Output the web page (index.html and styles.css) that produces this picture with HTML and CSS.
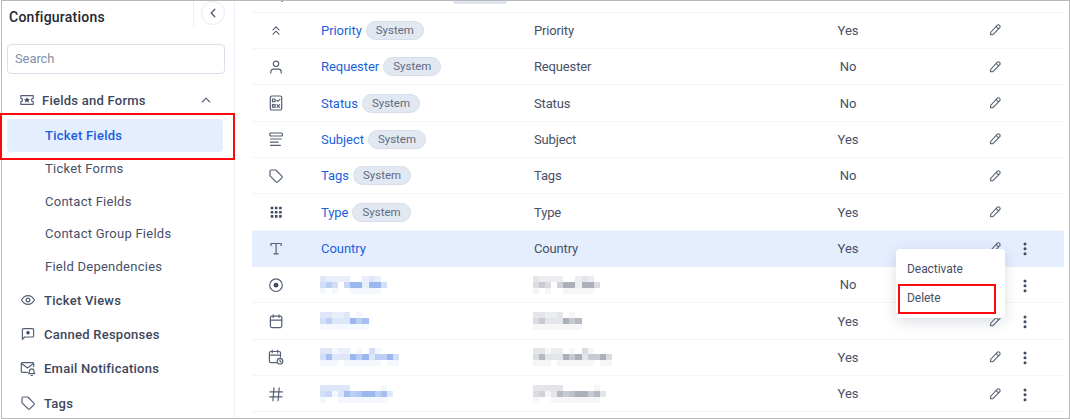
FILE: index.html
```html
<!DOCTYPE html>
<html lang="en">
<head>
    <meta charset="UTF-8">
    <meta name="viewport" content="width=device-width, initial-scale=1.0">
    <title>Ticket Fields</title>
    <link rel="stylesheet" href="styles.css">
</head>
<body>
    <svg class="sprite">
        <symbol id="i-priority" viewBox="0 0 16 16"><path d="M5 7.9l3-3 3 3M5 12.2l3-3 3 3"/></symbol>
        <symbol id="i-requester" viewBox="0 0 16 16"><circle cx="8" cy="4.8" r="2.7"/><path d="M2.8 14v-1.2a2.6 2.6 0 0 1 2.6-2.6h5.2a2.6 2.6 0 0 1 2.6 2.6V14"/></symbol>
        <symbol id="i-status" viewBox="0 0 16 16"><rect x="2.3" y="1" width="11.4" height="14" rx="1.6"/><path d="M4.5 4h2.6v2.6H4.5zM4.5 9.6h2.6v2.6H4.5zM8.8 5.4l1 1L12 4.2M9 9.7l2.6 2.6M11.6 9.7L9 12.3"/></symbol>
        <symbol id="i-subject" viewBox="0 0 16 16"><rect x="1.8" y="2" width="12.6" height="3" rx="1"/><path d="M2.5 8h10.7M2.5 11.2h7.6M2.5 14.4h9.8"/></symbol>
        <symbol id="i-tag" viewBox="0 0 16 16"><path d="M2 3.2A1.2 1.2 0 0 1 3.2 2h4.6l6.1 6.1a1.2 1.2 0 0 1 0 1.7l-4.1 4.1a1.2 1.2 0 0 1-1.7 0L2 7.8z"/></symbol>
        <symbol id="i-type" viewBox="0 0 16 16"><path class="solid" d="M2.7 2.7h2.6v2.6H2.7zM6.9 2.7h2.6v2.6H6.9zM11.1 2.7h2.6v2.6h-2.6zM2.7 6.9h2.6v2.6H2.7zM6.9 6.9h2.6v2.6H6.9zM11.1 6.9h2.6v2.6h-2.6zM2.7 11.1h2.6v2.6H2.7zM6.9 11.1h2.6v2.6H6.9zM11.1 11.1h2.6v2.6h-2.6z"/></symbol>
        <symbol id="i-text" viewBox="0 0 16 16"><path d="M3 5.6V3.5h10.2v2.1M8.1 3.5v10.3M6 13.8h4.2"/></symbol>
        <symbol id="i-radio" viewBox="0 0 16 16"><circle cx="8" cy="8.2" r="6.3"/><circle class="solid" cx="8" cy="8.2" r="2.4"/></symbol>
        <symbol id="i-date" viewBox="0 0 16 16"><rect x="2.4" y="3.2" width="11.4" height="11.4" rx="1.5"/><path d="M2.4 7.2h11.4M5.2 1.8v2.6M11 1.8v2.6"/></symbol>
        <symbol id="i-datetime" viewBox="0 0 16 16"><path d="M8.5 13.6H2.7a1.3 1.3 0 0 1-1.3-1.3V3.8a1.3 1.3 0 0 1 1.3-1.3h8.5a1.3 1.3 0 0 1 1.3 1.3V8M1.4 6.2h11.1M4.2 1.2v2.5M9.7 1.2v2.5"/><circle cx="12" cy="12.2" r="2.8"/><path d="M12 10.8v1.4l1 .7"/></symbol>
        <symbol id="i-hash" viewBox="0 0 16 16"><path d="M6 1.9L4.9 14.7M11.2 1.9l-1.1 12.8M2 5.9h12.4M1.6 10.8H14"/></symbol>
        <symbol id="i-edit" viewBox="0 0 16 16"><path d="M10.1 3.4a1.7 1.7 0 0 1 2.5 2.5l-6.4 6.4a1 1 0 0 1-.6.3l-2.1.2.2-2.2a1 1 0 0 1 .3-.6zM9.3 4.7l2 2"/></symbol>
        <symbol id="i-more" viewBox="0 0 16 16"><circle class="solid" cx="8" cy="3.9" r="1.5"/><circle class="solid" cx="8" cy="8.8" r="1.5"/><circle class="solid" cx="8" cy="13.7" r="1.5"/></symbol>
        <symbol id="i-ticket" viewBox="0 0 16 16"><path d="M1.8 3.6h12.4v2.7a1.7 1.7 0 0 0 0 3.4v2.7H1.8V9.7a1.7 1.7 0 0 0 0-3.4z"/><path class="solid" d="M8 5.2l.9 1.9 2.1.2-1.6 1.4.5 2L8 9.6l-1.9 1.1.5-2L5 7.3l2.1-.2z"/></symbol>
        <symbol id="i-eye" viewBox="0 0 16 16"><path d="M1.6 8C3 5.2 5.3 3.6 8 3.6s5 1.6 6.4 4.4c-1.4 2.8-3.7 4.4-6.4 4.4S3 10.8 1.6 8z"/><circle cx="8" cy="8" r="1.9"/></symbol>
        <symbol id="i-canned" viewBox="0 0 16 16"><path d="M2.4 13.4V3.6a1 1 0 0 1 1-1h9.2a1 1 0 0 1 1 1V10a1 1 0 0 1-1 1H4.6z"/><circle class="solid" cx="8" cy="6.8" r="1.8"/></symbol>
        <symbol id="i-mail" viewBox="0 0 16 16"><path d="M7.4 11.4H2.3a1 1 0 0 1-1-1V2.6a1 1 0 0 1 1-1h10.4a1 1 0 0 1 1 1v3M1.6 2.6l5.9 4.3 5.9-4.3"/><path d="M8.6 12.6c.9-.8.9-1.6.9-2.6a2.2 2.2 0 0 1 4.4 0c0 1 0 1.8.9 2.6zM11 14.5h1.5"/></symbol>
    </svg>

    <div class="frame">
        <aside class="sidebar">
            <div class="sidebar-header">
                <h1>Configurations</h1>
                <div class="collapse-wrap">
                    <button class="collapse"><svg class="chevron" viewBox="0 0 10 10"><path d="M6.8 1.3L3.2 5l3.6 3.7"/></svg></button>
                </div>
            </div>
            <input class="search" type="text" placeholder="Search">
            <nav>
                <a class="group open"><svg class="icon"><use href="#i-ticket"/></svg>Fields and Forms<svg class="caret" viewBox="0 0 10 10"><path d="M1.2 7L5 3.2 8.8 7"/></svg></a>
                <a class="sub active">Ticket Fields</a>
                <a class="sub">Ticket Forms</a>
                <a class="sub">Contact Fields</a>
                <a class="sub">Contact Group Fields</a>
                <a class="sub">Field Dependencies</a>
                <a class="group"><svg class="icon"><use href="#i-eye"/></svg>Ticket Views</a>
                <a class="group"><svg class="icon"><use href="#i-canned"/></svg>Canned Responses</a>
                <a class="group"><svg class="icon"><use href="#i-mail"/></svg>Email Notifications</a>
                <a class="group"><svg class="icon"><use href="#i-tag"/></svg>Tags</a>
            </nav>
        </aside>
        <main class="fields">
            <div class="row-end"><span class="icon-end"></span><span class="pill-end"></span></div>
            <div id="fieldRows"></div>
        </main>
    </div>

    <div class="menu">
        <a>Deactivate</a>
        <a>Delete</a>
    </div>
    <div class="mark mark-nav"></div>
    <div class="mark mark-delete"></div>

    <script src="script.js"></script>
</body>
</html>
```
FILE: styles.css
```css
* {
    box-sizing: border-box;
}
body {
    margin: 0;
    height: 419px;
    overflow: hidden;
    position: relative;
    background: #fff;
    font-family: Roboto, "Liberation Sans", sans-serif;
    font-size: 13px;
    color: #475067;
}
svg {
    fill: none;
    stroke: #566075;
    stroke-width: 1.2;
    stroke-linecap: round;
    stroke-linejoin: round;
}
.sprite {
    display: none;
}
.solid {
    fill: #414b60;
    stroke: none;
}
.icon {
    width: 16px;
    height: 16px;
    flex: none;
}
.frame {
    display: flex;
    height: 419px;
    margin-left: 1px;
    border: 1px solid #b9b9b9;
    overflow: hidden;
}

/* sidebar */
.sidebar {
    width: 233px;
    flex: none;
    padding: 0 10px 0 5px;
    border-right: 1px solid #eceff7;
}
.sidebar-header {
    display: flex;
    justify-content: space-between;
    height: 43px;
    padding-left: 2px;
}
h1 {
    margin: 7px 0 0;
    font-size: 14px;
    line-height: 18px;
    font-weight: 500;
    letter-spacing: 0.25px;
    color: #22272f;
}
.collapse-wrap {
    height: 25px;
    width: 31px;
    padding-left: 7px;
    border-left: 1px solid #eceff7;
}
.collapse {
    display: flex;
    align-items: center;
    justify-content: center;
    width: 24px;
    height: 24px;
    padding: 0;
    border: 1px solid #e6e9f3;
    border-radius: 50%;
    background: #fff;
}
.chevron {
    width: 10px;
    height: 10px;
    stroke-width: 1.4;
}
.search {
    display: block;
    width: 218px;
    height: 30px;
    padding: 0 7px 2px;
    border: 1px solid #d9dfeb;
    border-radius: 4px;
    font: inherit;
    letter-spacing: -0.1px;
    outline: none;
}
.search::placeholder {
    color: #8390a8;
}
nav {
    padding-top: 9px;
}
.group {
    display: flex;
    align-items: center;
    gap: 8px;
    height: 34.4px;
    padding: 0 13px;
    font-weight: 500;
    letter-spacing: 0.25px;
    color: #3d475c;
}
.group.open {
    gap: 7px;
    padding-left: 12px;
    margin-bottom: 2px;
}
.caret {
    width: 10px;
    height: 10px;
    margin-left: auto;
    stroke-width: 1.1;
}
.sub {
    display: flex;
    align-items: center;
    width: 216px;
    height: 32.7px;
    padding-left: 38px;
    border-radius: 4px;
    letter-spacing: 0.25px;
}
.sub.active {
    background: #e5eeff;
    font-weight: 500;
    color: #1c5fdc;
}

/* field list */
.fields {
    width: 812px;
    margin-left: 17px;
    flex: none;
}
.row-end {
    display: flex;
    height: 11.7px;
    padding-left: 29px;
    border-bottom: 1px solid #f2f5f9;
}
.icon-end {
    width: 2px;
    height: 1px;
    background: #8d94a3;
}
.pill-end {
    width: 54px;
    height: 3px;
    margin-left: 170px;
    border-radius: 0 0 8px 8px;
    background: #dde4f0;
}
.row {
    display: grid;
    grid-template-columns: 69px 213px 240px 148px 56px 34px 1fr;
    align-items: center;
    height: 36.35px;
    border-bottom: 1px solid #f2f5f9;
}
.row.selected {
    background: #e5eeff;
    border-color: #e5eeff;
}
.row > .icon {
    margin-left: 16px;
}
.name {
    display: flex;
    align-items: center;
    gap: 4px;
    letter-spacing: -0.05px;
    color: #1c5fdc;
}
.label {
    letter-spacing: -0.15px;
}
.pill {
    height: 19px;
    padding: 0 9px;
    border: 1px solid #d6dee9;
    border-radius: 10px;
    background: #e1e8f1;
    font-size: 11.5px;
    letter-spacing: 0;
    line-height: 17px;
    color: #616b80;
}
.required {
    text-align: center;
}
.edit {
    width: 16px;
    height: 16px;
    justify-self: end;
    margin-right: -25px;
    stroke-width: 1.1;
}
.more {
    width: 16px;
    height: 16px;
    justify-self: end;
    margin-right: -21px;
}

/* redacted values */
.mosaic {
    display: grid;
    grid-auto-rows: 6px;
    width: max-content;
    margin-left: -1px;
    color: #1f5fd9;
}
.mosaic.grey {
    color: #475067;
}
.mosaic i {
    background: currentColor;
}

/* context menu */
.menu {
    position: absolute;
    left: 896px;
    top: 249px;
    width: 109px;
    height: 69px;
    padding: 6px 11px;
    border-radius: 4px;
    background: #fff;
    box-shadow: 0 4px 14px rgba(40, 50, 80, 0.16);
    font-size: 12px;
    letter-spacing: -0.05px;
}
.menu a {
    display: block;
    line-height: 29px;
}
.mark {
    position: absolute;
    border: 2px solid #fa0a0a;
}
.mark-nav {
    left: 0;
    top: 113px;
    width: 235px;
    height: 47px;
}
.mark-delete {
    left: 898px;
    top: 284px;
    width: 98px;
    height: 30px;
}
```
FILE: script.js
```js
// mosaic: three lines of cells, one digit per cell = strength
const fields = [
    { icon: "priority", name: "Priority", system: true, required: "Yes" },
    { icon: "requester", name: "Requester", system: true, required: "No" },
    { icon: "status", name: "Status", system: true, required: "No" },
    { icon: "subject", name: "Subject", system: true, required: "Yes" },
    { icon: "tag", name: "Tags", system: true, required: "No" },
    { icon: "type", name: "Type", system: true, required: "Yes" },
    { icon: "text", name: "Country", required: "Yes", selected: true },
    { icon: "radio", mosaic: ["32222002320", "46405992994", "10100111110"], required: "No" },
    { icon: "date", mosaic: ["33223010", "46333968", "11111111"], required: "Yes" },
    { icon: "datetime", mosaic: ["3312201041000", "4833396936694", "1110111111011"], required: "Yes" },
    { icon: "hash", mosaic: ["333330000010", "451386799683", "100111111110"], required: "Yes" }
];

function mosaic(lines, cls) {
    const cells = lines.join("").split("").map(n => `<i style="opacity:${(n * 0.05).toFixed(2)}"></i>`).join("");
    return `<div class="mosaic ${cls}" style="grid-template-columns:repeat(${lines[0].length}, 6.07px)">${cells}</div>`;
}

function renderRows() {
    document.getElementById("fieldRows").innerHTML = fields.map(f => {
        const name = f.mosaic ? mosaic(f.mosaic, "") : f.name;
        const label = f.mosaic ? mosaic(f.mosaic, "grey") : f.name;
        return `<div class="row ${f.selected ? "selected" : ""}">
            <svg class="icon"><use href="#i-${f.icon}"/></svg>
            <div class="name">${name}${f.system ? '<span class="pill">System</span>' : ""}</div>
            <div class="label">${label}</div>
            <div class="required">${f.required}</div>
            <svg class="edit"><use href="#i-edit"/></svg>
            ${f.system ? "" : '<svg class="more"><use href="#i-more"/></svg>'}
        </div>`;
    }).join("");
}

renderRows();
```
